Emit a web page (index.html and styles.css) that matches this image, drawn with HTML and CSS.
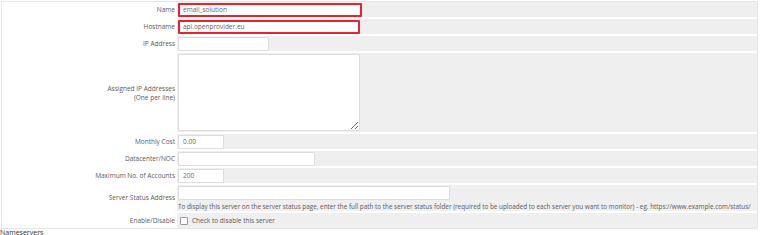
FILE: index.html
```html
<!DOCTYPE html>
<html>
<head>
<meta charset="utf-8">
<link rel="stylesheet" href="styles.css">
</head>
<body>
<div class="form">
  <div class="label">Name</div>
  <div class="field"><input class="inp w184 err" value="email_solution"></div>

  <div class="label">Hostname</div>
  <div class="field"><input class="inp w182 err" value="api.openprovider.eu"></div>

  <div class="label">IP Address</div>
  <div class="field"><input class="inp w91" value=""></div>

  <div class="label tall">Assigned IP Addresses<br>(One per line)</div>
  <div class="field tall"><textarea class="ta"></textarea></div>

  <div class="label">Monthly Cost</div>
  <div class="field"><input class="inp w46" value="0.00"></div>

  <div class="label">Datacenter/NOC</div>
  <div class="field"><input class="inp w137" value=""></div>

  <div class="label">Maximum No. of Accounts</div>
  <div class="field"><input class="inp w46" value="200"></div>

  <div class="label status">Server Status Address</div>
  <div class="field status col">
    <input class="inp w272" value="">
    <span class="help">To display this server on the server status page, enter the full path to the server status folder (required to be uploaded to each server you want to monitor) - eg. https://www.example.com/status/</span>
  </div>

  <div class="label">Enable/Disable</div>
  <div class="field"><label class="chk"><span class="box"></span>Check to disable this server</label></div>
</div>
<div class="heading">Nameservers</div>
</body>
</html>
```
FILE: styles.css
```css
html, body {
  margin: 0;
  padding: 0;
  background: #fff;
  font-family: "Open Sans", "Liberation Sans", sans-serif;
  font-size: 6.5px;
  color: #5a5a5a;
}
.form {
  margin: 1px 2px 0 1px;
  border: 1px solid #e1e6ea;
  display: grid;
  grid-template-columns: 175px 1fr;
  row-gap: 2px;
}
.label {
  background: #fff;
  text-align: right;
  padding-right: 2px;
  height: 15px;
  display: flex;
  align-items: center;
  justify-content: flex-end;
  line-height: 9px;
}
.field {
  background: #efefef;
  height: 15px;
  display: flex;
  align-items: center;
  padding-left: 1px;
}
.tall { height: 79px; }
.status { height: 25px; }
.field.col {
  flex-direction: column;
  align-items: flex-start;
  justify-content: flex-start;
  padding-top: 1px;
}
.inp {
  box-sizing: border-box;
  height: 14px;
  border: 1px solid #dcdcdc;
  border-radius: 1px;
  background: #fff;
  font-family: inherit;
  font-size: 6.5px;
  color: #666;
  padding: 0 4px;
  margin: 0;
  outline: none;
}
.err { border: 2px solid #e8232f; padding: 0 3px; }
.w184 { width: 184px; }
.w182 { width: 182px; }
.w91 { width: 91px; }
.w46 { width: 46px; }
.w137 { width: 137px; }
.w272 { width: 272px; }
.ta {
  box-sizing: border-box;
  width: 182px;
  height: 77px;
  border: 1px solid #dcdcdc;
  border-radius: 1px;
  background: #fff;
  margin: 0;
  padding: 2px;
  font-family: inherit;
  font-size: 6.5px;
}
.help {
  margin-top: 2px;
  font-size: 6.35px;
  white-space: nowrap;
}
.chk {
  display: flex;
  align-items: center;
  gap: 4px;
  padding-left: 2px;
}
.box {
  width: 6px;
  height: 6px;
  border: 1px solid #999;
  border-radius: 1px;
  background: #fff;
}
.heading {
  margin-top: 0;
  line-height: 8px;
  font-size: 7px;
  color: #333;
}
```
